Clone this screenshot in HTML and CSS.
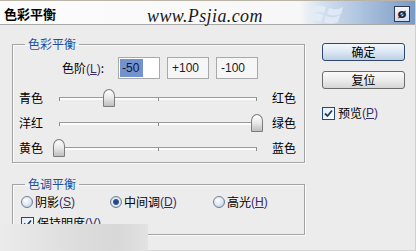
FILE: index.html
```html
<!DOCTYPE html>
<html>
<head>
<meta charset="utf-8">
<link rel="stylesheet" href="styles.css">
</head>
<body>
<div class="dialog">
  <div class="titlebar">
    <span class="title">色彩平衡</span>
    <span class="site">www.Psjia.com</span>
    <svg class="logo" width="40" height="24" viewBox="0 0 40 24">
      <path d="M4 6 Q10 3 17 6 L15 12 Q9 9 2 12 Z" fill="#e4edf7" opacity="0.8"/>
      <path d="M20 7 Q27 10 34 6 L32 13 Q25 16 18 13 Z" fill="#e4edf7" opacity="0.8"/>
      <path d="M1 14 Q8 11 14 14 L12 21 Q6 18 -1 21 Z" fill="#e4edf7" opacity="0.8"/>
      <path d="M17 15 Q24 18 31 14 L29 21 Q22 24 15 21 Z" fill="#e4edf7" opacity="0.8"/>
    </svg>
    <span class="help">ø</span>
  </div>
  <div class="body">
    <div class="main">
      <fieldset class="group g1">
        <legend>色彩平衡</legend>
        <div class="levels">
          <span class="lbl">色阶<span class="key">(<u>L</u>)</span>:</span>
          <span class="field selected"><span class="hl">-50</span></span>
          <span class="field">+100</span>
          <span class="field">-100</span>
        </div>
        <div class="srow">
          <span class="sl">青色</span>
          <div class="track"><i class="tk t0"></i><i class="tk t50"></i><i class="tk t100"></i><span class="thumb" style="left:25%"></span></div>
          <span class="sr">红色</span>
        </div>
        <div class="srow">
          <span class="sl">洋红</span>
          <div class="track"><i class="tk t0"></i><i class="tk t50"></i><i class="tk t100"></i><span class="thumb" style="left:100%"></span></div>
          <span class="sr">绿色</span>
        </div>
        <div class="srow">
          <span class="sl">黄色</span>
          <div class="track"><i class="tk t0"></i><i class="tk t50"></i><i class="tk t100"></i><span class="thumb" style="left:0%"></span></div>
          <span class="sr">蓝色</span>
        </div>
      </fieldset>
      <fieldset class="group g2">
        <legend>色调平衡</legend>
        <div class="radios">
          <span class="radio r1"><span class="dot"></span>阴影<span class="key">(<u>S</u>)</span></span>
          <span class="radio r2"><span class="dot on"></span>中间调<span class="key">(<u>D</u>)</span></span>
          <span class="radio r3"><span class="dot"></span>高光<span class="key">(<u>H</u>)</span></span>
        </div>
        <div class="keep">
          <span class="cb"><svg width="11" height="11" viewBox="0 0 11 11"><path d="M2 5.5 L4.5 8 L9 2.5" fill="none" stroke="#1f3f6e" stroke-width="1.8"/></svg></span>保持明度<span class="key">(<u>V</u>)</span>
        </div>
      </fieldset>
    </div>
    <div class="side">
      <div class="btn default">确定</div>
      <div class="btn">复位</div>
      <div class="preview">
        <span class="cb"><svg width="11" height="11" viewBox="0 0 11 11"><path d="M2 5.5 L4.5 8 L9 2.5" fill="none" stroke="#1f3f6e" stroke-width="1.8"/></svg></span>预览<span class="key">(<u>P</u>)</span>
      </div>
    </div>
  </div>
  <div class="smudge"></div>
</div>
</body>
</html>
```
FILE: styles.css
```css
* { box-sizing: border-box; }
html, body { margin: 0; padding: 0; }
body {
  width: 416px;
  height: 251px;
  overflow: hidden;
  background: #ececec;
  font-family: "Noto Sans CJK SC", "Liberation Sans", sans-serif;
  font-size: 12px;
  color: #000;
}
.dialog {
  position: relative;
  width: 416px;
  height: 251px;
  display: flex;
  flex-direction: column;
  border-right: 1px solid #d0d0d0;
  border-bottom: 1px solid #d4d4d4;
}
.titlebar {
  height: 25px;
  flex: none;
  display: flex;
  align-items: center;
  border-bottom: 1px solid #a8a8a8;
  border-top: 1px solid #b9b3a8;
  background: linear-gradient(to right, #fcfcfc 0, #f7f7f7 72%, #d2dfee 78%, #a9c0dd 88%, #7b9ac4 100%);
}
.title {
  font-weight: bold;
  font-size: 13px;
  line-height: 16px;
  margin-left: 4px;
  padding-top: 3px;
}
.site {
  font-family: "Liberation Serif", serif;
  font-style: italic;
  font-size: 18px;
  line-height: 20px;
  color: #1a1a1a;
  margin-left: 91px;
  padding-top: 6px;
  letter-spacing: 0.4px;
}
.logo {
  margin-left: 46px;
  flex: none;
}
.help {
  margin-left: auto;
  margin-right: 5px;
  width: 16px;
  height: 16px;
  border: 1px solid #2c3d5a;
  background: linear-gradient(#f4f7fb, #cfdcec);
  font-family: "DejaVu Sans", sans-serif;
  font-weight: bold;
  font-size: 13px;
  line-height: 13px;
  text-align: center;
  color: #1b2538;
  margin-top: 3px;
}
.body {
  flex: 1;
  display: flex;
}
.main {
  padding: 11px 0 0 12px;
}
.group {
  margin: 0;
  width: 293px;
  min-width: 0;
  border: 1px solid #a4a4a4;
  box-shadow: inset 1px 1px 0 #fafafa, 1px 1px 0 #fafafa;
}
.group legend {
  padding: 0 3px;
  margin-left: 12px;
  color: #1c4f9f;
  line-height: 16px;
}
.g1 { padding: 0 0 2px 0; }
.g2 { padding: 0 0 3px 0; margin-top: 13px; }
.key { font-family: "Liberation Sans", sans-serif; color: #3a2c6a; }
.key u { text-underline-offset: 1px; }
.levels {
  display: flex;
  align-items: center;
  height: 22px;
  margin-top: 5px;
  margin-bottom: 6px;
  padding-left: 49px;
  gap: 7px;
}
.lbl { line-height: 16px; margin-right: 4px; width: 45px; }
.field {
  width: 42px;
  height: 22px;
  border: 1px solid #a9a9a9;
  background: #f6f6f6;
  font-family: "Liberation Sans", sans-serif;
  font-size: 12px;
  line-height: 20px;
  padding-left: 4px;
  color: #1e1a2a;
}
.field.selected { background: #fff; padding-left: 1px; }
.hl { background: #7393cc; color: #0e1640; padding: 2px 4px 2px 2px; }
.srow {
  height: 25px;
  display: flex;
  align-items: center;
  padding-left: 6px;
}
.sl { width: 40px; line-height: 16px; }
.sr { margin-left: 15px; line-height: 16px; }
.track {
  position: relative;
  width: 198px;
  height: 3px;
  border-top: 1px solid #9a9a9a;
  background: #fcfcfc;
  margin-top: 1px;
}
.tk {
  position: absolute;
  top: 0;
  width: 1px;
  height: 3px;
  background: #8a8a8a;
}
.t0 { left: 0; }
.t50 { left: 99px; }
.t100 { right: 0; }
.thumb {
  position: absolute;
  top: -9px;
  width: 12px;
  height: 18px;
  margin-left: -6px;
  border: 1px solid #7c7c7c;
  border-radius: 6px 6px 1px 1px / 7px 7px 1px 1px;
  background: linear-gradient(#ffffff, #e8e8e8 50%, #bdbdbd);
}
.radios {
  display: flex;
  align-items: center;
  height: 16px;
  margin-top: 2px;
  padding-left: 8px;
}
.radio { display: flex; align-items: center; line-height: 16px; }
.r1 { width: 89px; }
.r2 { width: 103px; }
.dot {
  width: 12px;
  height: 12px;
  border-radius: 50%;
  border: 1px solid #6f7f96;
  background: radial-gradient(circle at 40% 35%, #ffffff, #dfe7f1 50%, #a9b8cc);
  margin-right: 2px;
  flex: none;
}
.dot.on {
  background: radial-gradient(circle, #1a3e78 0, #2c5597 2.5px, #e6edf6 3.5px, #bcc8d8 6px);
}
.keep {
  display: flex;
  align-items: center;
  height: 16px;
  margin-top: 5px;
  padding-left: 8px;
  line-height: 16px;
}
.cb {
  width: 13px;
  height: 13px;
  border: 1px solid #1f4b7a;
  background: linear-gradient(135deg, #e3ebf5, #ffffff);
  display: flex;
  align-items: center;
  justify-content: center;
  margin-right: 3px;
  flex: none;
}
.side {
  margin-left: 17px;
  padding-top: 18px;
  width: 83px;
  display: flex;
  flex-direction: column;
}
.btn {
  height: 18px;
  border: 1px solid #6b6b6b;
  border-radius: 3px;
  background: linear-gradient(#fafafa, #ececec 50%, #d6d6d6);
  text-align: center;
  line-height: 16px;
  margin-bottom: 10px;
}
.btn.default {
  border-color: #30486e;
  background: linear-gradient(#f3f7fc, #dce7f4 50%, #bccfe6);
}
.preview {
  display: flex;
  align-items: center;
  margin-top: 6px;
  line-height: 16px;
}
.smudge {
  position: absolute;
  left: 0;
  top: 224px;
  width: 148px;
  height: 27px;
  background: linear-gradient(to right, #ebebeb, #dcdcdc 55%, #d8d8d8 80%, #e2e2e2);
}
```
